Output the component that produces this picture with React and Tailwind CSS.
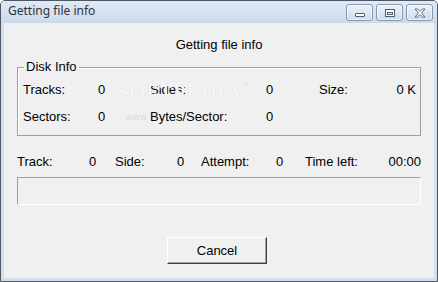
import React from 'react';

const CaptionButton = ({ children }) => (
  <div className="w-[27px] h-[17px] rounded-[3px] border border-[#8797ad] bg-gradient-to-b from-[#eef3f9] to-[#cddaea] flex items-center justify-center shadow-[inset_0_0_0_1px_rgba(255,255,255,0.6)]">
    {children}
  </div>
);

const MinIcon = () => (
  <svg width="12" height="10" viewBox="0 0 12 10">
    <rect x="1.5" y="5.5" width="9" height="3" rx="0.5" fill="#fff" stroke="#4e5d72" />
  </svg>
);

const MaxIcon = () => (
  <svg width="12" height="10" viewBox="0 0 12 10">
    <rect x="1.5" y="1.5" width="9" height="7" fill="#fff" stroke="#4e5d72" />
    <rect x="3.5" y="4.5" width="5" height="2" fill="#e4ebf3" stroke="#4e5d72" />
  </svg>
);

const CloseIcon = () => (
  <svg width="14" height="10" viewBox="0 0 14 10">
    <path
      d="M2 1 H4.5 L7 3.3 L9.5 1 H12 L8.6 5 L12 9 H9.5 L7 6.7 L4.5 9 H2 L5.4 5 Z"
      fill="#fff"
      stroke="#5b6a7f"
      strokeWidth="1"
      strokeLinejoin="round"
    />
  </svg>
);

export default function App() {
  return (
    <div className="w-[438px] h-[282px] bg-[#d3dfec] border border-[#4f5763] rounded-t-[5px] flex flex-col overflow-hidden font-['Liberation_Sans',Arial,sans-serif]">
      {/* Title bar */}
      <div className="h-[22px] flex items-start pt-[3px] pl-[7px] pr-[4px] bg-gradient-to-b from-[#e0eaf6] to-[#cbdaeb]">
        <span className="flex-1 text-[12px] leading-[16px] -mt-[1px] text-[#2f3338] font-['Noto_Sans',sans-serif]">
          Getting file info
        </span>
        <div className="flex gap-[3px]">
          <CaptionButton><MinIcon /></CaptionButton>
          <CaptionButton><MaxIcon /></CaptionButton>
          <CaptionButton><CloseIcon /></CaptionButton>
        </div>
      </div>

      {/* Client area */}
      <div className="relative flex-1 mx-[3px] mb-[3px] bg-[#f0f0f0] px-[13px] pt-[14px] flex flex-col text-[13px] leading-[16px] text-black">
        <div className="h-[16px] text-center">Getting file info</div>

        <fieldset className="mt-[6px] border border-[#a0a0a0] shadow-[inset_1px_1px_0_#ffffff] pb-[10px]">
          <legend className="ml-[6px] px-[2px] leading-[16px]">Disk Info</legend>
          <div className="grid grid-cols-[75px_52px_116px_53px_1fr] pl-[5px] pr-[4px] pt-[7px] gap-y-[11px]">
            <span>Tracks:</span>
            <span>0</span>
            <span>Sides:</span>
            <span>0</span>
            <span className="flex justify-between"><span>Size:</span><span>0 K</span></span>
            <span>Sectors:</span>
            <span>0</span>
            <span>Bytes/Sector:</span>
            <span>0</span>
            <span></span>
          </div>
        </fieldset>

        {/* Softpedia watermark */}
        <div className="absolute left-[113px] top-[59px] pointer-events-none select-none">
          <span className="font-['Liberation_Serif',serif] text-[20px] leading-[20px] tracking-[2px] text-[#f9f9f9] [text-shadow:0_0_1px_#d4d4d4]">
            SOFTPEDIA
          </span>
          <span className="align-top text-[6px] leading-[6px] text-[#dcdcdc]">™</span>
        </div>
        <div className="absolute left-[122px] top-[88px] pointer-events-none select-none text-[9px] leading-[12px] text-[#dadada] tracking-[0.5px]">
          www
        </div>

        <div className="mt-[18px] grid grid-cols-[72px_26px_62px_24px_75px_29px_1fr] h-[16px]">
          <span>Track:</span>
          <span>0</span>
          <span>Side:</span>
          <span>0</span>
          <span>Attempt:</span>
          <span>0</span>
          <span className="flex justify-between"><span>Time left:</span><span>00:00</span></span>
        </div>

        <div className="mt-[7px] h-[28px] border-t border-l border-[#a0a0a0] border-b border-r border-b-white border-r-white"></div>

        <button className="mt-[32px] ml-[150px] w-[100px] h-[27px] bg-[#f0f0f0] border border-t-white border-l-white border-b-[#404040] border-r-[#404040] shadow-[inset_-1px_-1px_0_#a0a0a0] text-[13px] leading-[16px] text-black">
          Cancel
        </button>
      </div>
    </div>
  );
}
